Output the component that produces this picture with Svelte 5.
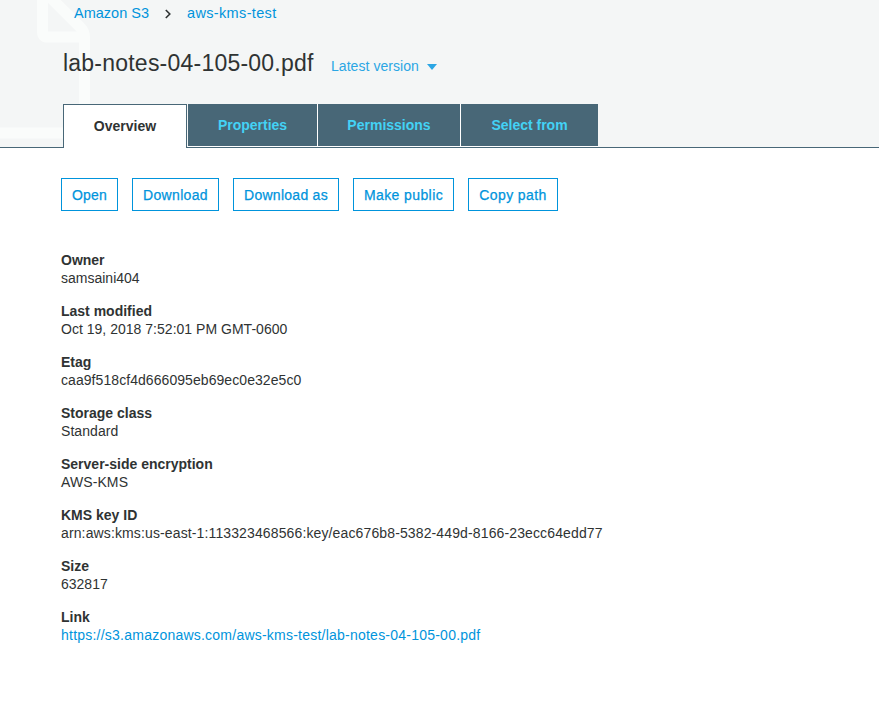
<script>
  const tabs = [
    { label: 'Properties', width: 130 },
    { label: 'Permissions', width: 143 },
    { label: 'Select from', width: 137 }
  ];
  const actions = [
    { label: 'Open', width: 57, tracking: 0.2 },
    { label: 'Download', width: 87, tracking: 0.33 },
    { label: 'Download as', width: 106, tracking: 0.27 },
    { label: 'Make public', width: 101, tracking: 0.4 },
    { label: 'Copy path', width: 90, tracking: 0.4 }
  ];
  const details = [
    { label: 'Owner', value: 'samsaini404', tracking: 0 },
    { label: 'Last modified', value: 'Oct 19, 2018 7:52:01 PM GMT-0600', tracking: 0.02 },
    { label: 'Etag', value: 'caa9f518cf4d666095eb69ec0e32e5c0', tracking: 0.065 },
    { label: 'Storage class', value: 'Standard', tracking: 0.06 },
    { label: 'Server-side encryption', value: 'AWS-KMS', tracking: 0.1 },
    { label: 'KMS key ID', value: 'arn:aws:kms:us-east-1:113323468566:key/eac676b8-5382-449d-8166-23ecc64edd77', tracking: 0.127 },
    { label: 'Size', value: '632817', tracking: 0 },
    { label: 'Link', value: 'https://s3.amazonaws.com/aws-kms-test/lab-notes-04-105-00.pdf', tracking: 0.23, link: true }
  ];
</script>

<div class="page">
  <header>
    <svg class="watermark" width="100" height="147" viewBox="0 0 100 147" aria-hidden="true">
      <path d="M42.5 -8V32q0 5 5 5H84.5M45 -8L80 27Q84.5 31 84.5 37V128q0 5-5 5H-8" />
    </svg>
    <nav class="crumbs">
      <a class="root" href="#s3">Amazon S3</a>
      <svg width="6" height="10" viewBox="0 0 6 10"><path d="M.8 1L4.8 5L.8 9" /></svg>
      <a class="bucket" href="#bucket">aws-kms-test</a>
    </nav>
    <div class="heading">
      <h1>lab-notes-04-105-00.pdf</h1>
      <button class="version">Latest version
        <svg width="10" height="6" viewBox="0 0 10 6"><path d="M0 0H10L5 6Z" /></svg>
      </button>
    </div>
    <div class="tabs">
      <button class="tab active">Overview</button>
      {#each tabs as tab}
        <button class="tab" style:width="{tab.width}px">{tab.label}</button>
      {/each}
    </div>
  </header>
  <main>
    <div class="actions">
      {#each actions as action}
        <button style:width="{action.width}px" style:letter-spacing="{action.tracking}px">{action.label}</button>
      {/each}
    </div>
    <dl>
      {#each details as item}
        <div class="item">
          <dt>{item.label}</dt>
          <dd style:letter-spacing="{item.tracking}px">{#if item.link}<a href={item.value}>{item.value}</a>{:else}{item.value}{/if}</dd>
        </div>
      {/each}
    </dl>
  </main>
</div>

<style>
  :global(body) { margin: 0; background: #fff; }
  * { box-sizing: border-box; }
  .page {
    height: 715px;
    overflow: hidden;
    font: 14px/18px "Liberation Sans", Arial, sans-serif;
    color: #2f3333;
  }
  button { font: inherit; padding: 0; margin: 0; border: 0; background: none; border-radius: 0; white-space: nowrap; }
  a { color: #0094dc; text-decoration: none; }
  header {
    position: relative;
    display: flex;
    flex-direction: column;
    height: 148px;
    background: #f4f6f6;
    border-bottom: 1px solid #486777;
  }
  .watermark { position: absolute; left: 0; top: 0; }
  .watermark path { fill: none; stroke: #fafcfb; stroke-width: 11; }
  .crumbs { position: relative; display: flex; align-items: center; height: 26px; padding-left: 74px; }
  .crumbs svg { margin: 1px 16px 0 15px; }
  .crumbs path { fill: none; stroke: #2f3333; stroke-width: 1.6; }
  .root { width: 76px; font-size: 14.5px; }
  .bucket { font-size: 14.5px; letter-spacing: .35px; }
  .heading { position: relative; display: flex; height: 78px; padding: 23px 0 0 63px; }
  h1 { margin: 0; width: 268px; font-size: 23px; line-height: 28px; letter-spacing: .22px; font-weight: 400; white-space: nowrap; }
  .version { display: flex; align-items: center; gap: 8px; height: 18px; margin-top: 8px; color: #2ba6e4; letter-spacing: .05px; }
  .version svg { margin-top: 2px; }
  .version path { fill: #2ba6e4; }
  .tabs { position: relative; display: flex; height: 43px; padding-left: 63px; }
  .tab {
    height: 43px;
    color: #43d2f5;
    background: #486777;
    border-right: 1px solid #fff;
    border-bottom: 1px solid #fff;
    font-weight: 700;
  }
  .tab:last-child { border-right: 0; }
  .tab.active {
    width: 124px;
    height: 44px;
    padding-bottom: 2px;
    margin-right: 1px;
    background: #fff;
    color: #2f3333;
    border: 1px solid #486777;
    border-bottom: 0;
  }
  main { padding: 30px 61px 0; }
  .actions { display: flex; gap: 14px; }
  .actions button { height: 33px; border: 1px solid #0094dc; color: #0094dc; -webkit-text-stroke: .25px #0094dc; }
  dl { margin: 40px 0 0; display: flex; flex-direction: column; gap: 15px; }
  dt { font-weight: 700; }
  dd { margin: 0; white-space: nowrap; }
</style>
